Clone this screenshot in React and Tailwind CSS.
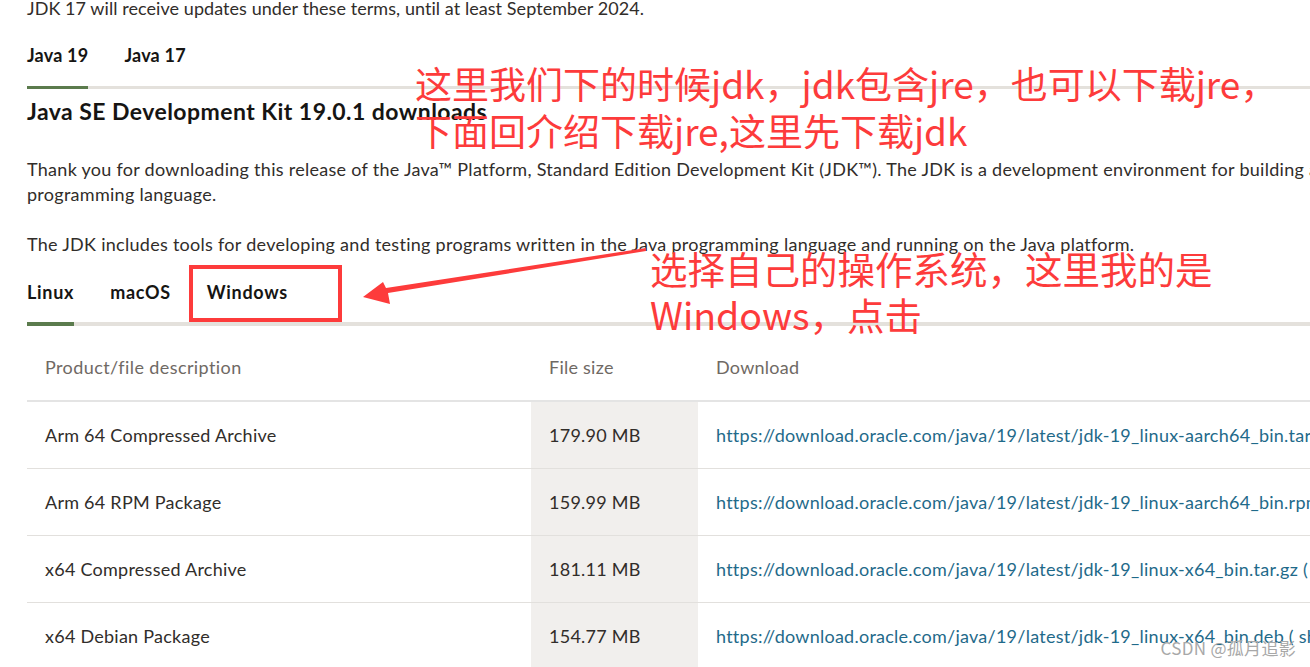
import React from "react";

const rows = [
  ["Arm 64 Compressed Archive", "179.90 MB", "https://download.oracle.com/java/19/latest/jdk-19_linux-aarch64_bin.tar.gz ( sha256 )"],
  ["Arm 64 RPM Package", "159.99 MB", "https://download.oracle.com/java/19/latest/jdk-19_linux-aarch64_bin.rpm ( sha256 )"],
  ["x64 Compressed Archive", "181.11 MB", "https://download.oracle.com/java/19/latest/jdk-19_linux-x64_bin.tar.gz ( sha256 )"],
  ["x64 Debian Package", "154.77 MB", "https://download.oracle.com/java/19/latest/jdk-19_linux-x64_bin.deb ( sha256 )"],
];

export default function App() {
  return (
    <div className="relative w-[1310px] h-[667px] overflow-hidden bg-white text-[#312d2a] font-['Lato',sans-serif]">
      <div className="w-[1500px] pl-[27px]">
        <p className="mt-[-4px] text-[18px] leading-[24px] tracking-[0.06px] whitespace-nowrap">
          JDK 17 will receive updates under these terms, until at least September 2024.
        </p>

        <div className="mt-[23px] w-[1283px] flex gap-[36px] border-b-[3px] border-[#e4e1dc] text-[18px] leading-[24px] font-bold tracking-[0.2px] text-[#161513]">
          <div className="pb-[19px] -mb-[3px] border-b-[3px] border-[#5b7b4d]">Java 19</div>
          <div className="pb-[19px]">Java 17</div>
        </div>

        <h2 className="mt-[8px] text-[23px] leading-[28px] font-bold tracking-[0.45px] text-[#161513] whitespace-nowrap">
          Java SE Development Kit 19.0.1 downloads
        </h2>

        <p className="mt-[32px] text-[18px] leading-[25px] tracking-[0.28px] whitespace-nowrap">
          Thank you for downloading this release of the Java™ Platform, Standard Edition Development Kit (JDK™). The JDK is a development environment for building applications and components using the Java
          <br />
          programming language.
        </p>

        <p className="mt-[25px] text-[18px] leading-[25px] tracking-[0.28px] whitespace-nowrap">
          The JDK includes tools for developing and testing programs written in the Java programming language and running on the Java platform.
        </p>

        <div className="mt-[23px] w-[1283px] flex gap-[36px] border-b-[4px] border-[#e4e1dc] text-[18px] leading-[24px] font-bold tracking-[0.7px] text-[#161513]">
          <div className="pb-[18px] -mb-[4px] border-b-[4px] border-[#5b7b4d]">Linux</div>
          <div className="pb-[18px]">macOS</div>
          <div className="pb-[18px]">Windows</div>
        </div>

        <div className="w-[1400px] text-[18px] leading-[24px] tracking-[0.25px]">
          <div className="grid grid-cols-[504px_167px_1fr] border-b-2 border-[#e4e4e4] text-[#6f6964]">
            <div className="pl-[18px] pt-[29px] pb-[21px] tracking-[0.4px]">Product/file description</div>
            <div className="pl-[18px] pt-[29px] pb-[21px]">File size</div>
            <div className="pl-[18px] pt-[29px] pb-[21px]">Download</div>
          </div>
          {rows.map(([d, s, u]) => (
            <div key={d} className="grid grid-cols-[504px_167px_1fr] border-b border-[#e2e0dd]">
              <div className="pl-[18px] py-[21px] whitespace-nowrap">{d}</div>
              <div className="pl-[18px] py-[21px] bg-[#f1efed] whitespace-nowrap">{s}</div>
              <div className="pl-[18px] py-[21px] whitespace-nowrap text-[#1f6a8a]">{u}</div>
            </div>
          ))}
        </div>
      </div>

      {/* annotations */}
      <div className="absolute left-[415px] top-[60px] text-[37px] leading-[47px] text-[#fd3b3b] whitespace-nowrap font-['Noto_Sans_CJK_SC',sans-serif]">
        <div>这里我们下的时候jdk，jdk包含jre，也可以下载jre，</div>
        <div>下面回介绍下载jre,这里先下载jdk</div>
      </div>

      <div className="absolute left-[650px] top-[245px] text-[37.5px] leading-[46px] text-[#fd3b3b] whitespace-nowrap font-['Noto_Sans_CJK_SC',sans-serif]">
        <div>选择自己的操作系统，这里我的是</div>
        <div>Windows，点击</div>
      </div>

      <div className="absolute left-[189px] top-[265px] w-[153px] h-[57px] border-4 border-[#fd3b3b]" />

      <svg className="absolute left-0 top-0" width="1310" height="667">
        <polygon
          points="646,248 646,251 388,293 390,304 363,297 383,282 386,288"
          fill="#fd3b3b"
        />
      </svg>

      <div className="absolute right-[14px] top-[637px] text-[17px] leading-[22px] tracking-[0.3px] text-[#a8a8a8] font-['Noto_Sans_CJK_SC',sans-serif] whitespace-nowrap">
        CSDN @孤月追影
      </div>
    </div>
  );
}
